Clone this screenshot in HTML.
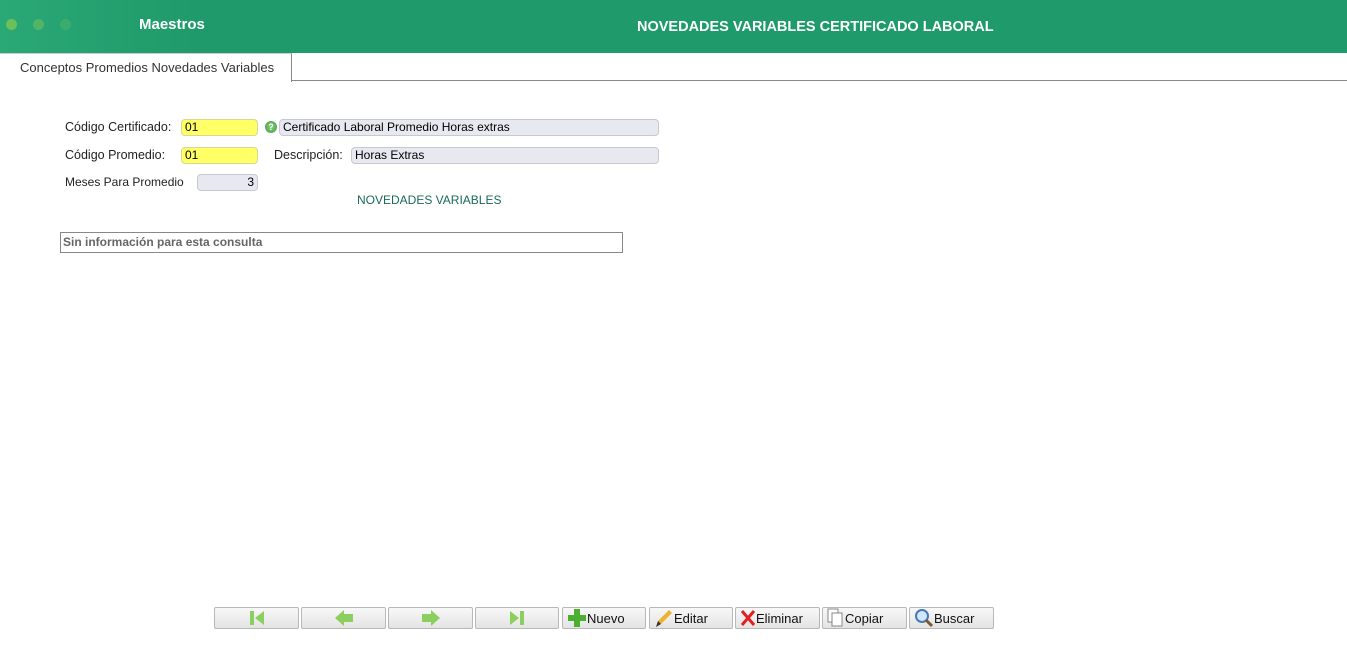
<!DOCTYPE html>
<html><head><meta charset="utf-8"><style>
body{margin:0;width:1347px;height:649px;background:#fff;font-family:"Liberation Sans",sans-serif;position:relative;overflow:hidden}
.a{position:absolute}
.hdr{left:0;top:0;width:1347px;height:53px;background:linear-gradient(90deg,#2aa876 0,#1f9a6a 200px,#1f9a6a)}
.dot{width:11px;height:11px;border-radius:50%;top:19px}
.lbl{font-size:12.5px;color:#222}
.in{height:15px;border:1px solid #c8c8d0;border-radius:4px;background:#e8e8f0;font-size:12px;line-height:15px;padding:0 3px;box-sizing:content-box;color:#000}
.y{background:#ffff66;border-color:#d8d890}
.btn{top:607px;height:22px;width:83px;border:1px solid #b8b8b8;border-radius:2px;background:linear-gradient(#f8f8f8,#e4e4e4);font-size:13px;color:#111;display:flex;align-items:center;justify-content:center;box-sizing:border-box}
.t{justify-content:flex-start;padding-left:4px}
</style></head><body>
<div class="a hdr"></div>
<div class="a dot" style="left:6px;background:#6cc05a"></div>
<div class="a dot" style="left:33px;background:#52b565"></div>
<div class="a dot" style="left:60px;background:#3aad6c"></div>
<div class="a" style="left:139px;top:16px;color:#fff;font-weight:bold;font-size:15px">Maestros</div>
<div class="a" style="left:637px;top:19px;color:#fff;font-weight:bold;font-size:14.5px">NOVEDADES VARIABLES CERTIFICADO LABORAL</div>
<div class="a" style="left:292px;top:80px;width:1055px;height:1px;background:#888"></div>
<div class="a" style="left:0;top:53px;width:291px;height:28px;border-right:1px solid #888;border-top:1px solid #ccc;background:#fff"></div>
<div class="a" style="left:20px;top:60px;font-size:13px;color:#333">Conceptos Promedios Novedades Variables</div>

<div class="a lbl" style="left:65px;top:120px">Código Certificado:</div>
<div class="a in y" style="left:181px;top:119px;width:69px">01</div>
<div class="a" style="left:265px;top:121px;width:12px;height:12px;border-radius:50%;background:radial-gradient(#8fd080,#3a9a40);color:#fff;font-size:9px;font-weight:bold;text-align:center;line-height:12px">?</div>
<div class="a in" style="left:279px;top:119px;width:372px">Certificado Laboral Promedio Horas extras</div>

<div class="a lbl" style="left:65px;top:148px">Código Promedio:</div>
<div class="a in y" style="left:181px;top:147px;width:69px">01</div>
<div class="a lbl" style="left:274px;top:148px">Descripción:</div>
<div class="a in" style="left:351px;top:147px;width:300px">Horas Extras</div>

<div class="a lbl" style="left:65px;top:175px;font-size:12px">Meses Para Promedio</div>
<div class="a in" style="left:197px;top:174px;width:53px;text-align:right">3</div>
<div class="a" style="left:357px;top:193px;font-size:12px;color:#1a6a5a">NOVEDADES VARIABLES</div>

<div class="a" style="left:60px;top:232px;width:559px;height:19px;border:1px solid #888;font-size:12px;font-weight:bold;color:#666;line-height:19px;padding-left:2px;box-sizing:content-box">Sin información para esta consulta</div>

<div class="a btn" style="left:214px;width:85px"><svg width="18" height="18"><rect x="2" y="2" width="4" height="14" fill="#8ccf5e"/><path d="M16 2 L7 9 L16 16Z" fill="#8ccf5e"/></svg></div>
<div class="a btn" style="left:301px;width:85px"><svg width="20" height="18"><path d="M1 9 L10 1 V5 H19 V13 H10 V17Z" fill="#8ccf5e"/></svg></div>
<div class="a btn" style="left:388px;width:85px"><svg width="20" height="18"><path d="M19 9 L10 1 V5 H1 V13 H10 V17Z" fill="#8ccf5e"/></svg></div>
<div class="a btn" style="left:475px;width:84px"><svg width="18" height="18"><rect x="12" y="2" width="4" height="14" fill="#8ccf5e"/><path d="M2 2 L11 9 L2 16Z" fill="#8ccf5e"/></svg></div>
<div class="a btn t" style="left:562px;width:84px"><svg width="20" height="20"><path d="M7 1H13V7H19V13H13V19H7V13H1V7H7Z" fill="#4caf30"/></svg>Nuevo</div>
<div class="a btn t" style="left:649px;width:84px"><svg width="20" height="20"><path d="M2 19 L4 13 L15 2 L18 5 L7 16Z" fill="#f0b030"/><path d="M2 19L4 13L7 16Z" fill="#333"/></svg>Editar</div>
<div class="a btn t" style="left:735px;width:85px"><svg width="16" height="18"><path d="M2 2L14 16M14 2L2 16" stroke="#e02020" stroke-width="3"/></svg>Eliminar</div>
<div class="a btn t" style="left:822px;width:85px"><svg width="18" height="20"><rect x="1" y="1" width="10" height="13" fill="#fff" stroke="#888"/><rect x="5" y="5" width="10" height="13" fill="#fff" stroke="#888"/></svg>Copiar</div>
<div class="a btn t" style="left:909px;width:85px"><svg width="20" height="20"><circle cx="8" cy="8" r="6" fill="#cfe6ff" stroke="#4a78b0" stroke-width="2"/><path d="M12 12L18 18" stroke="#7a5a30" stroke-width="3"/></svg>Buscar</div>
</body></html>
